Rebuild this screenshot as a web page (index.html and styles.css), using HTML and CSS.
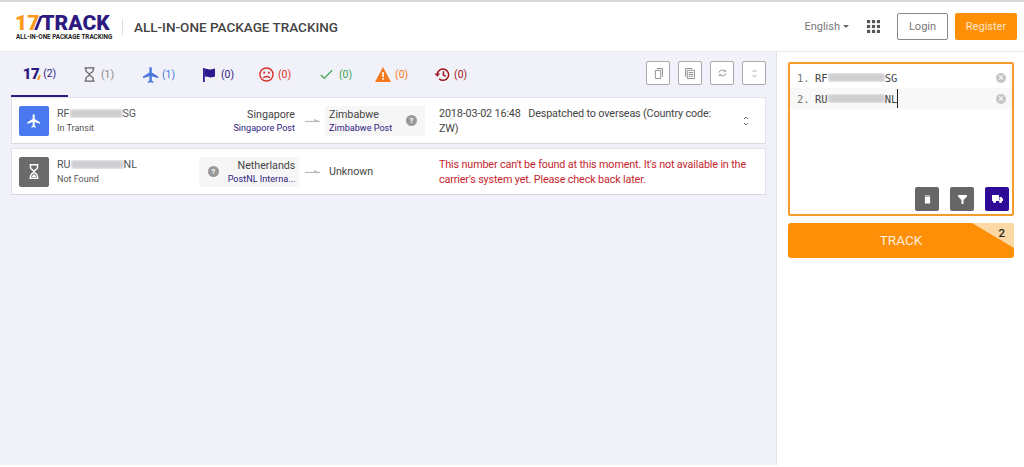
FILE: index.html
```html
<!DOCTYPE html>
<html lang="en">
<head>
    <meta charset="UTF-8">
    <title>17TRACK</title>
    <link rel="stylesheet" href="styles.css">
</head>
<body>
    <header class="header">
        <div class="logo">
            <div class="logo-main"><span class="logo-num">17</span><span class="logo-slash"></span><span class="logo-track">TRACK</span></div>
            <div class="logo-sub">ALL-IN-ONE PACKAGE TRACKING</div>
        </div>
        <h1 class="title">ALL-IN-ONE PACKAGE TRACKING</h1>
        <div class="lang">English<i class="caret"></i></div>
        <svg class="apps" width="13" height="13" viewBox="0 0 14 14" fill="#555">
            <rect x="0" y="0" width="3.4" height="3.4"/><rect x="5.3" y="0" width="3.4" height="3.4"/><rect x="10.6" y="0" width="3.4" height="3.4"/>
            <rect x="0" y="5.3" width="3.4" height="3.4"/><rect x="5.3" y="5.3" width="3.4" height="3.4"/><rect x="10.6" y="5.3" width="3.4" height="3.4"/>
            <rect x="0" y="10.6" width="3.4" height="3.4"/><rect x="5.3" y="10.6" width="3.4" height="3.4"/><rect x="10.6" y="10.6" width="3.4" height="3.4"/>
        </svg>
        <button class="btn-login">Login</button>
        <button class="btn-register">Register</button>
    </header>

    <div class="main">
        <section class="results">
            <div class="toolbar">
                <nav class="tabs">
                    <div class="tab tab-all active"><span class="tab-logo">17<i></i></span>(2)</div>
                    <div class="tab tab-pending">
                        <svg width="11" height="15" viewBox="0 0 11 15" fill="none" stroke="#666" stroke-width="1.3"><path d="M.5 .8h10M.5 14.200h10M1.800 1v2.500c0 2 3.700 2.500 3.700 4S1.800 9.500 1.800 11.500V14M9.200 1v2.500c0 2-3.700 2.500-3.700 4s3.700 2 3.700 4V14"/></svg>
                        (1)
                    </div>
                    <div class="tab tab-transit">
                        <svg width="16" height="16" viewBox="2 2 20 20" fill="#4a78dc"><path d="M21 16v-2l-8-5V3.500a1.500 1.500 0 0 0-3 0V9l-8 5v2l8-2.500V19l-2 1.500V22l3.500-1 3.500 1v-1.500L13 19v-5.500z"/></svg>
                        (1)
                    </div>
                    <div class="tab tab-flag">
                        <svg width="12" height="14" viewBox="0 0 12 14" fill="#2e1a8e"><path d="M0 0h1.800v14H0z"/><path d="M1.800 1c2.500-1 4 .8 6 .5S10.500 1 12 .6v7.800c-1.500.4-2.500.8-4.200 1s-3.500-1.500-6-.5z"/></svg>
                        (0)
                    </div>
                    <div class="tab tab-alert">
                        <svg width="15" height="15" viewBox="0 0 16 16" fill="none" stroke="#d9302b" stroke-width="1.500"><circle cx="8" cy="8" r="7"/><path d="M4.500 11.800c1-2.200 6-2.200 7 0"/><circle cx="5.500" cy="6" r="1.100" fill="#d9302b" stroke="none"/><circle cx="10.500" cy="6" r="1.100" fill="#d9302b" stroke="none"/></svg>
                        (0)
                    </div>
                    <div class="tab tab-done">
                        <svg width="13" height="11" viewBox="0 0 15 12" fill="none" stroke="#3da24f" stroke-width="1.500"><path d="M1 6.500l4 4L14 1"/></svg>
                        (0)
                    </div>
                    <div class="tab tab-warn">
                        <svg width="16" height="15" viewBox="0 0 16 15"><path d="M8 0l8 15H0z" fill="#f6791e"/><path d="M7.200 5h1.600v5H7.200zM7.200 11h1.600v1.700H7.200z" fill="#fff"/></svg>
                        (0)
                    </div>
                    <div class="tab tab-expired">
                        <svg width="16" height="15" viewBox="0 0 17 15" fill="none" stroke="#a3151f" stroke-width="1.600"><path d="M3.500 7.500a6 6 0 1 1 2 4.700"/><path d="M10 4v4l2.500 1.500"/><path d="M0.500 6.500h6L3.500 10z" fill="#a3151f" stroke="none"/></svg>
                        (0)
                    </div>
                </nav>
                <div class="tools">
                    <button class="tool"><svg width="9" height="11" viewBox="0 0 10 12" fill="none" stroke="#888"><path d="M1.500 2.500h6v9h-6zM3 .5h6.500v9"/></svg></button>
                    <button class="tool"><svg width="10" height="11" viewBox="0 0 11 12" fill="none" stroke="#888"><path d="M2.500 2.500h8v9h-8zM.5 9.500V.5H8M4 5h5M4 7h5M4 9h5"/></svg></button>
                    <button class="tool"><svg width="9" height="8" viewBox="0 0 10 9" fill="none" stroke="#888"><path d="M1 4a4 3.500 0 0 1 7-1.500M9 5a4 3.500 0 0 1-7 1.500"/><path d="M8.500 .8v2.200H6.300M1.500 8.200V6h2.200" stroke-width=".8"/></svg></button>
                    <button class="tool"><svg width="5" height="9" viewBox="0 0 6 10" fill="none" stroke="#888"><path d="M1 3l2-2 2 2M1 7l2 2 2-2"/></svg></button>
                </div>
            </div>

            <div class="item">
                <div class="status status-transit">
                    <svg width="16" height="16" viewBox="0 0 24 24" fill="#fff"><path d="M21 16v-2l-8-5V3.500a1.500 1.500 0 0 0-3 0V9l-8 5v2l8-2.500V19l-2 1.500V22l3.500-1 3.500 1v-1.500L13 19v-5.500z"/></svg>
                </div>
                <div class="info">
                    <p class="number">RF<span class="blur"><i></i></span>SG</p>
                    <p class="state">In Transit</p>
                </div>
                <div class="carrier from">
                    <p class="country">Singapore</p>
                    <p class="post">Singapore Post</p>
                </div>
                <svg class="arrow" width="15" height="6" viewBox="0 0 15 6"><path d="M0 3.500h15" stroke="#bbb" stroke-width="1.200"/><path d="M15 3.500L9 1v2.500z" fill="#bbb"/></svg>
                <div class="carrier to shaded">
                    <div>
                        <p class="country">Zimbabwe</p>
                        <p class="post">Zimbabwe Post</p>
                    </div>
                    <i class="help">?</i>
                </div>
                <p class="event">2018-03-02 16:48&nbsp;&nbsp;&nbsp;Despatched to overseas (Country code: ZW)</p>
                <svg class="expand" width="6" height="10" viewBox="0 0 6 10" fill="none" stroke="#777"><path d="M1 3l2-2 2 2M1 7l2 2 2-2"/></svg>
            </div>

            <div class="item">
                <div class="status status-pending">
                    <svg width="10" height="15" viewBox="0 0 10 15" fill="none" stroke="#fff" stroke-width="1.400"><path d="M.5 .8h9M.5 14.200h9M1.500 1v2.500c0 2 3.500 2.500 3.500 4S1.500 10 1.500 12v2M8.500 1v2.500c0 2-3.500 2.500-3.500 4s3.500 2.500 3.500 4.500v2"/><path d="M2.500 13l2.500-3 2.500 3z" fill="#fff" stroke="none"/></svg>
                </div>
                <div class="info">
                    <p class="number">RU<span class="blur"><i></i></span>NL</p>
                    <p class="state">Not Found</p>
                </div>
                <div class="carrier from shaded">
                    <i class="help">?</i>
                    <div>
                        <p class="country">Netherlands</p>
                        <p class="post">PostNL Interna...</p>
                    </div>
                </div>
                <svg class="arrow" width="15" height="6" viewBox="0 0 15 6"><path d="M0 3.500h15" stroke="#bbb" stroke-width="1.200"/><path d="M15 3.500L9 1v2.500z" fill="#bbb"/></svg>
                <div class="carrier to">
                    <p class="country">Unknown</p>
                </div>
                <p class="event event-error">This number can't be found at this moment. It's not available in the carrier's system yet. Please check back later.</p>
            </div>
        </section>

        <aside class="side">
            <div class="numbers">
                <div class="line"><span class="line-no">1.</span><span class="line-text">RF<span class="blur"><i></i></span>SG</span><i class="clear">×</i></div>
                <div class="line current"><span class="line-no">2.</span><span class="line-text">RU<span class="blur"><i></i></span>NL<i class="cursor"></i></span><i class="clear">×</i></div>
                <div class="actions">
                    <button class="action">
                        <svg width="7" height="9" viewBox="0 0 8 9" fill="#fff"><path d="M1 0h6v1H1zM1 1.500h6V9H1z"/></svg>
                    </button>
                    <button class="action">
                        <svg width="9" height="9" viewBox="0 0 9 9" fill="#fff"><path d="M0 0h9v1.500L5.500 5v4h-2V5L0 1.500z"/></svg>
                    </button>
                    <button class="action action-truck">
                        <svg width="11" height="8" viewBox="0 0 11 8" fill="#fff"><path d="M0 0h7v6H0zM7.500 2h2L11 4v2H7.500z"/><circle cx="2.500" cy="6.500" r="1.500"/><circle cx="8.500" cy="6.500" r="1.500"/></svg>
                    </button>
                </div>
            </div>
            <button class="track">TRACK<span class="corner"></span><span class="count">2</span></button>
        </aside>
    </div>
</body>
</html>
```
FILE: styles.css
```css
* {
    box-sizing: border-box;
}

html,
body {
    margin: 0;
    height: 100%;
    overflow: hidden;
}

body {
    display: flex;
    flex-direction: column;
    padding-bottom: 2px;
    font-family: Roboto, "Liberation Sans", sans-serif;
    font-size: 11px;
    color: #444;
    background: #fff;
}

p {
    margin: 0;
}

i {
    font-style: normal;
}

button {
    font-family: inherit;
    cursor: pointer;
}

/* header */
.header {
    height: 52px;
    flex: none;
    display: flex;
    align-items: center;
    padding: 0 7px 0 15px;
    border-top: 2px solid #d8d8d8;
    border-bottom: 1px solid #e8e8ee;
}

.logo {
    width: 97px;
}

.logo-main {
    display: flex;
    align-items: center;
    height: 20px;
    font-weight: 900;
    font-size: 21px;
    line-height: 20px;
}

.logo-num {
    color: #fb9a1a;
}

.logo-slash {
    width: 3px;
    height: 14px;
    margin: 0 1px 0 -2px;
    background: #2e1a80;
    transform: skewX(-22deg);
}

.logo-track {
    color: #2e1a80;
}

.logo-sub {
    margin: 1px 0 0 1px;
    font-size: 6.3px;
    line-height: 7px;
    font-weight: 700;
    color: #222;
    white-space: nowrap;
}

.title {
    margin: 0 auto 0 10px;
    padding-left: 11px;
    border-left: 1px solid #ddd;
    font-size: 13.5px;
    line-height: 16px;
    font-weight: 500;
    color: #444;
}

.lang {
    display: flex;
    align-items: center;
    color: #777;
    margin-right: 18px;
}

.caret {
    margin-left: 3px;
    border: 3px solid transparent;
    border-top-color: #666;
    border-bottom: 0;
}

.apps {
    margin-right: 17px;
}

.btn-login,
.btn-register {
    height: 27px;
    border-radius: 2px;
    font-size: 11px;
}

.btn-login {
    width: 51px;
    margin-right: 7px;
    background: #fff;
    border: 1px solid #888;
    color: #777;
}

.btn-register {
    width: 62px;
    background: #ff8f07;
    border: none;
    color: #ffe6c4;
}

/* main area */
.main {
    flex: 1;
    display: flex;
}

.results {
    width: 777px;
    padding: 0 10px 0 11px;
    background: #f1f1f9;
    border-right: 1px solid #e2e2ea;
}

.toolbar {
    height: 45px;
    display: flex;
    align-items: center;
    justify-content: space-between;
}

.tabs {
    display: flex;
    height: 45px;
}

.tab {
    display: flex;
    align-items: center;
    justify-content: center;
    gap: 4px;
    height: 45px;
    margin-right: 27px;
    font-size: 10.4px;
}

.tab.active {
    width: 57px;
    margin-right: 16px;
    border-bottom: 2px solid #2e1a80;
}

.tab-logo {
    font-weight: 900;
    font-size: 15px;
    letter-spacing: -0.5px;
    color: #2e1a80;
    position: relative;
}

.tab-logo i {
    position: absolute;
    right: -1px;
    bottom: 3px;
    width: 2px;
    height: 5px;
    background: #fb9a1a;
    transform: skewX(-20deg);
}

.tab-all {
    color: #2e1a80;
}

.tab-pending {
    gap: 6px;
    margin-right: 29px;
    color: #888;
}

.tab-transit {
    gap: 3px;
    margin-right: 28px;
    color: #4a78dc;
}

.tab-flag {
    gap: 6px;
    margin-right: 25px;
    color: #2e1a80;
}

.tab-alert {
    margin-right: 29px;
    color: #d9302b;
}

.tab-done {
    gap: 6px;
    margin-right: 23px;
    color: #3da24f;
}

.tab-warn {
    margin-right: 26px;
    color: #f6791e;
}

.tab-expired {
    color: #a3151f;
}

.tools {
    display: flex;
    gap: 8px;
    margin-top: -3px;
}

.tool {
    width: 24px;
    height: 24px;
    padding: 0;
    display: flex;
    align-items: center;
    justify-content: center;
    background: #fff;
    border: 1px solid #aaa;
    border-radius: 2px;
}

/* result rows */
.item {
    display: flex;
    align-items: center;
    height: 47px;
    margin-bottom: 4px;
    padding: 0 16px 0 7px;
    background: #fff;
    border: 1px solid #e2e2ea;
    border-bottom-color: #d8d8e0;
}

.status {
    width: 30px;
    height: 30px;
    flex: none;
    display: flex;
    align-items: center;
    justify-content: center;
    border-radius: 2px;
}

.status-transit {
    background: #4a78f0;
}

.status-pending {
    background: #6b6b6b;
}

.info {
    width: 142px;
    margin-left: 8px;
}

.number {
    font-size: 10.7px;
    line-height: 15px;
    color: #555;
    display: flex;
    align-items: center;
}

.state {
    font-size: 9px;
    line-height: 15px;
    color: #555;
}

.blur {
    display: inline-block;
    width: 53px;
    height: 9px;
    overflow: hidden;
}

.blur i {
    display: block;
    height: 100%;
    background: #cfcfd2;
    filter: blur(1.5px);
}

.carrier {
    width: 100px;
    height: 30px;
    flex: none;
    display: flex;
    flex-direction: column;
    justify-content: center;
}

.carrier.from {
    text-align: right;
    padding-right: 4px;
}

.carrier.to {
    padding-left: 4px;
    margin-right: 14px;
}

.carrier.shaded {
    flex-direction: row;
    align-items: center;
    background: #f6f6f6;
}

.carrier.shaded .help {
    flex: none;
}

.carrier.shaded div {
    flex: 1;
}

.country {
    font-size: 10.7px;
    line-height: 15px;
    color: #444;
}

.post {
    font-size: 9.1px;
    line-height: 13px;
    color: #2e1a80;
    white-space: nowrap;
}

.help {
    display: flex;
    align-items: center;
    justify-content: center;
    width: 11px;
    height: 11px;
    border-radius: 50%;
    background: #999;
    color: #fff;
    font-size: 8px;
    font-weight: 700;
    margin: 0 9px;
}

.to .help {
    margin: 0 8px 0 0;
}

.arrow {
    margin: 0 5px 0 6px;
    flex: none;
}

.event {
    flex: 1;
    font-size: 10.8px;
    letter-spacing: -0.15px;
    line-height: 15px;
    color: #444;
}

.event-error {
    color: #c4252d;
}

.expand {
    flex: none;
    margin-left: 20px;
}

/* right panel */
.side {
    flex: 1;
    padding: 10px 10px 0 11px;
}

.numbers {
    position: relative;
    height: 154px;
    padding-top: 3px;
    border: 2px solid #f59a2c;
    border-radius: 2px;
}

.line {
    display: flex;
    align-items: center;
    height: 21px;
    padding: 0 6px 0 7px;
}

.line.current {
    background: #f8f8f8;
}

.line-no {
    width: 18px;
    font-family: "DejaVu Sans Mono", monospace;
    font-size: 10.5px;
    color: #777;
}

.line-text {
    flex: 1;
    display: flex;
    align-items: center;
    font-family: "DejaVu Sans Mono", monospace;
    font-size: 10.5px;
    color: #444;
}

.line-text .blur {
    width: 57px;
}

.cursor {
    width: 1px;
    height: 19px;
    background: #222;
}

.clear {
    display: flex;
    align-items: center;
    justify-content: center;
    width: 10px;
    height: 10px;
    border-radius: 50%;
    background: #c4c4c4;
    color: #fff;
    font-size: 10px;
    line-height: 10px;
}

.actions {
    position: absolute;
    right: 3px;
    bottom: 3px;
    display: flex;
    gap: 11px;
}

.action {
    width: 24px;
    height: 24px;
    padding: 0;
    border: none;
    border-radius: 2px;
    background: #666;
    display: flex;
    align-items: center;
    justify-content: center;
}

.action-truck {
    background: #2e0a96;
}

.track {
    position: relative;
    display: block;
    width: 100%;
    height: 35px;
    margin-top: 7px;
    padding: 0 0 2px;
    border: none;
    border-radius: 3px;
    overflow: hidden;
    background: #ff8f07;
    color: #ffeeda;
    font-size: 13.5px;
}

.corner {
    position: absolute;
    top: 0;
    right: 0;
    border-style: solid;
    border-width: 0 42px 25px 0;
    border-color: transparent #fcd8a5 transparent transparent;
}

.count {
    position: absolute;
    top: 3px;
    right: 9px;
    font-size: 11.5px;
    font-weight: 500;
    color: #222;
}
```
